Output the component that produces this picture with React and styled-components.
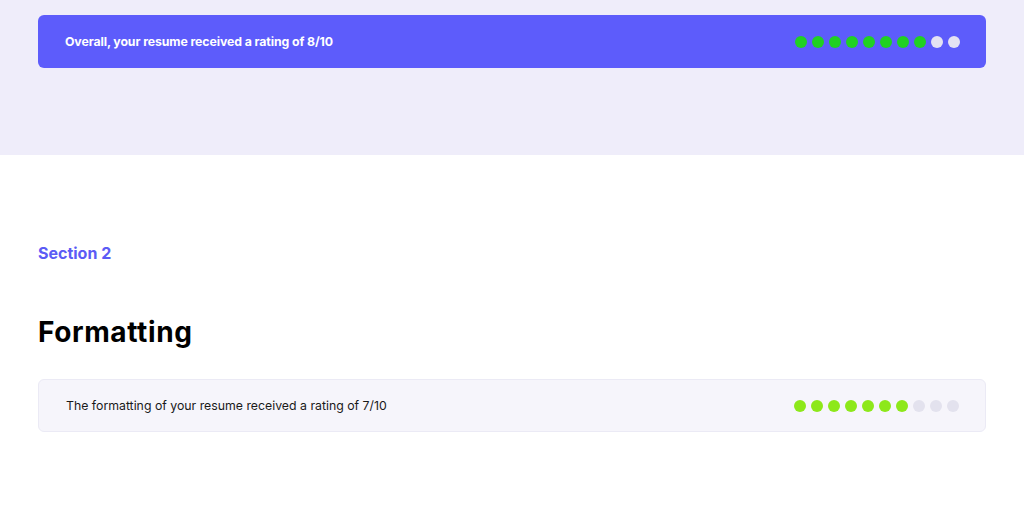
import React from 'react';
import styled, { createGlobalStyle } from 'styled-components';

const GlobalStyle = createGlobalStyle`
  html, body {
    margin: 0;
    padding: 0;
    background: #ffffff;
    font-family: Inter, "Noto Sans", sans-serif;
  }
`;

const Page = styled.div`
  width: 1024px;
`;

const Summary = styled.section`
  background: #efedfa;
  height: 155px;
  padding: 15px 38px 0;
  box-sizing: border-box;
`;

const Banner = styled.div`
  display: flex;
  align-items: center;
  justify-content: space-between;
  height: 53px;
  padding: 0 26px 0 27px;
  border-radius: 6px;
  background: #5d5cfb;
  box-sizing: border-box;
`;

const BannerText = styled.span`
  color: #ffffff;
  font-size: 12.3px;
  font-weight: 700;
  letter-spacing: -0.1px;
`;

const Dots = styled.div`
  display: flex;
  gap: 5px;
`;

const Dot = styled.span`
  width: 12px;
  height: 12px;
  border-radius: 50%;
  background: ${(p) => (p.$on ? p.$color : p.$off)};
`;

const Content = styled.section`
  padding: 88px 38px 0;
`;

const Eyebrow = styled.div`
  color: #5b5bf5;
  font-size: 16px;
  font-weight: 700;
  line-height: 20px;
`;

const Heading = styled.h2`
  margin: 52px 0 0;
  color: #000000;
  font-size: 28px;
  font-weight: 700;
  line-height: 34px;
  letter-spacing: 0.6px;
`;

const Card = styled.div`
  display: flex;
  align-items: center;
  justify-content: space-between;
  margin-top: 30px;
  height: 53px;
  padding: 0 26px 0 27px;
  border: 1px solid #ebeaf5;
  border-radius: 6px;
  background: #f6f5fb;
  box-sizing: border-box;
`;

const CardText = styled.span`
  color: #1a1a1a;
  font-size: 12.3px;
  font-weight: 400;
`;

const Rating = ({ value, color, off }) => (
  <Dots>
    {Array.from({ length: 10 }, (_, i) => (
      <Dot key={i} $on={i < value} $color={color} $off={off} />
    ))}
  </Dots>
);

const App = () => (
  <Page>
    <GlobalStyle />
    <Summary>
      <Banner>
        <BannerText>Overall, your resume received a rating of 8/10</BannerText>
        <Rating value={8} color="#20d122" off="#e4e2f3" />
      </Banner>
    </Summary>
    <Content>
      <Eyebrow>Section 2</Eyebrow>
      <Heading>Formatting</Heading>
      <Card>
        <CardText>The formatting of your resume received a rating of 7/10</CardText>
        <Rating value={7} color="#8de81a" off="#e3e2ee" />
      </Card>
    </Content>
  </Page>
);

export default App;
